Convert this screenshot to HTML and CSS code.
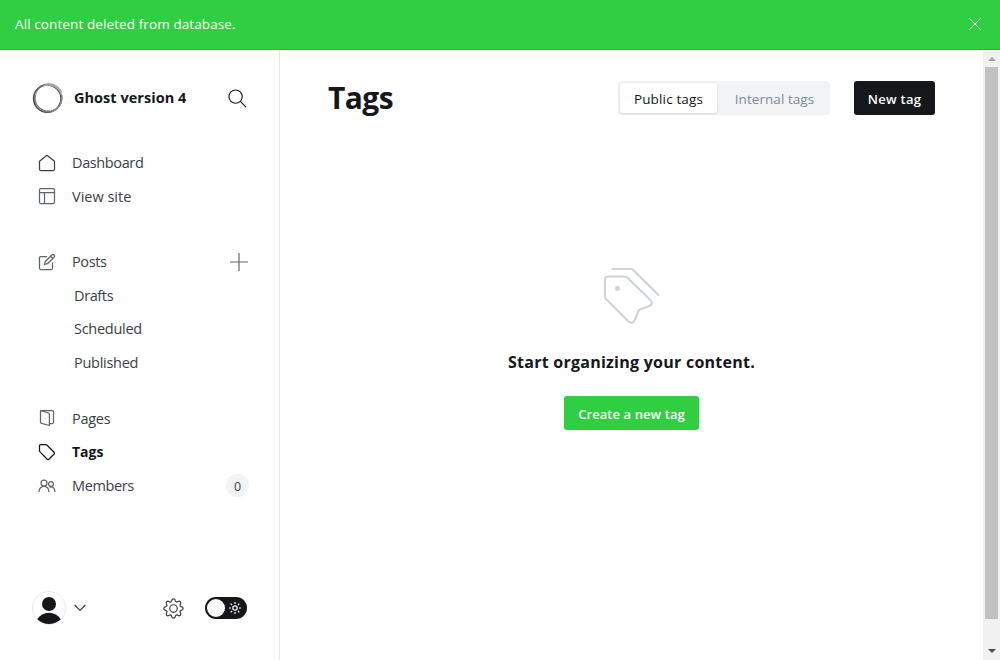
FILE: index.html
```html
<!DOCTYPE html>
<html lang="en">
<head>
<meta charset="utf-8">
<title>Tags</title>
<link rel="stylesheet" href="styles.css">
</head>
<body>
<div class="alert"><span class="alert-text">All content deleted from database.</span>
<svg class="close" viewBox="0 0 12 12"><path d="M.5.5l11 11M11.5.5l-11 11"/></svg></div>
<div class="app">
<aside class="sidebar">
  <header class="site">
    <svg class="logo" viewBox="0 0 32 32"><circle cx="15.300" cy="16.600" r="13.700" stroke="#444" stroke-width="1.500"/><ellipse cx="16.600" cy="16" rx="13.400" ry="14" stroke="#888" stroke-width="1"/><ellipse cx="15.700" cy="15.800" rx="14" ry="13.300" stroke="#666" stroke-width=".9" transform="rotate(35 16 16)"/><path d="M13 2.500C20 .5 27 4 29.500 10M11 4c8-2.500 16 1 18.500 9" stroke="#aaa" stroke-width="1.200"/><path d="M29.700 13c1 8-3 14-10 16.500" stroke="#888" stroke-width="1.500"/></svg>
    <span class="site-name">Ghost version 4</span>
    <svg class="search" viewBox="0 0 20 20"><circle cx="8" cy="8" r="7"/><path d="M13 13l6 6"/></svg>
  </header>
  <nav class="nav">
    <ul class="group">
      <li class="item"><svg class="icon home" viewBox="0 0 18 18"><path d="M1.500 7.200L9 1.300l7.500 5.900v8.100a1.200 1.200 0 0 1-1.200 1.200H2.700a1.200 1.200 0 0 1-1.200-1.200z"/></svg><span class="tight">Dashboard</span></li>
      <li class="item"><svg class="icon" viewBox="0 0 18 18"><rect x="1.500" y="1.500" width="15" height="15" rx="1.200"/><path d="M1.500 5.500h15M6.500 5.500v11"/></svg><span>View site</span></li>
    </ul>
    <ul class="group">
      <li class="item"><svg class="icon edit" viewBox="0 0 18 18"><path d="M9 3.500H2.700a1.200 1.200 0 0 0-1.200 1.200v10.600a1.200 1.200 0 0 0 1.200 1.200h10.600a1.200 1.200 0 0 0 1.200-1.200V9.500M6.500 11.500l.8-3 6.500-6.500a1.500 1.500 0 0 1 2.200 2.200l-6.500 6.500zM12.500 3.300l2.200 2.200"/></svg><span class="tight">Posts</span><svg class="plus" viewBox="0 0 18 18"><path d="M9 0v18M0 9h18"/></svg></li>
      <li class="item sub"><span class="tight">Drafts</span></li>
      <li class="item sub"><span class="snug">Scheduled</span></li>
      <li class="item sub"><span class="snug">Published</span></li>
    </ul>
    <ul class="group pages">
      <li class="item"><svg class="icon" viewBox="0 0 18 18"><path d="M2.500 1.500l8 2.500q.9.300.9 1.200v11.300l-7.900-2.200q-1-.3-1-1.300zM3 1.500h11.300q1.200 0 1.200 1.200v10.600q0 1.200-1.200 1.200h-2.500"/></svg><span class="snug">Pages</span></li>
      <li class="item active"><svg class="icon" viewBox="0 0 18 18"><path d="M1.500 2.700q0-1.200 1.200-1.200h5q.6 0 1.100.5l7.300 7.300q.9.900 0 1.700l-5.200 5.200q-.8.800-1.700 0L2 8.900q-.5-.5-.5-1.100z"/></svg><span>Tags</span></li>
      <li class="item"><svg class="icon members" viewBox="0 0 18 18"><circle cx="6" cy="6" r="3"/><path d="M1 15c.3-3.800 2-5.600 5-5.600s4.700 1.800 5 5.600"/><circle cx="13" cy="7" r="2.400"/><path d="M11.500 10.200c3.500-1 5.300.8 5.500 4.800"/></svg><span class="tight">Members</span><span class="badge">0</span></li>
    </ul>
  </nav>
  <footer class="tools">
    <svg class="avatar" viewBox="0 0 34 34"><circle cx="17" cy="17" r="16.500" fill="#fff" stroke="#e9ebed"/><circle cx="17" cy="13" r="7" fill="#15171a"/><path d="M5.200 28.300C8 24 12 21.800 17 21.800s9 2.200 11.800 6.500C25.500 31.300 21.500 33 17 33s-8.500-1.700-11.800-4.700z" fill="#15171a"/></svg>
    <svg class="chevron" viewBox="0 0 12 8"><path d="M.7 1L6 6.500 11.300 1"/></svg>
    <svg class="gear" viewBox="0 0 24 24"><circle cx="12" cy="12" r="4.300"/><path d="M9.900 3.100c.5-2.800 3.700-2.800 4.200 0 .3 1.400 1.500 1.900 2.700 1.100 2.300-1.600 4.600.7 3 3-.8 1.200-.3 2.400 1.100 2.700 2.800.5 2.800 3.700 0 4.200-1.400.3-1.900 1.500-1.100 2.700 1.600 2.300-.7 4.600-3 3-1.200-.8-2.400-.3-2.700 1.100-.5 2.800-3.700 2.800-4.200 0-.3-1.400-1.500-1.900-2.700-1.100-2.300 1.600-4.600-.7-3-3 .8-1.200.3-2.400-1.100-2.700-2.800-.5-2.800-3.700 0-4.200 1.400-.3 1.900-1.500 1.100-2.700-1.600-2.300.7-4.600 3-3 1.200.8 2.400.3 2.700-1.100z"/></svg>
    <span class="toggle"><i class="knob"></i><svg class="sun" viewBox="0 0 12 12"><circle cx="6" cy="6" r="2.200"/><path d="M6 0v2M6 10v2M0 6h2M10 6h2M1.700 1.700l1.400 1.400M8.900 8.900l1.400 1.400M1.700 10.300l1.400-1.400M8.900 3.100l1.400-1.400"/></svg></span>
  </footer>
</aside>
<main class="main">
  <header class="head">
    <h1 class="title">Tags</h1>
    <div class="tabs"><span class="tab on">Public tags</span><span class="tab">Internal tags</span></div>
    <button class="btn dark">New tag</button>
  </header>
  <section class="empty">
    <svg class="tags-art" viewBox="0 0 58 58"><path d="M9.500 2H28q1.200 0 2 .8L55.500 28M2 12.500Q2 9.500 5 9.500h16.500q1.800 0 3 1.200L47.300 33q3.300 3.800-.7 6l-9.200 3.200q-1.500.6-2 2L32 52.700q-2.200 5.200-6.200 2L3 32q-1-1-1-2.500z"/><circle cx="14.500" cy="21.500" r="2.500" class="hole"/></svg>
    <h2 class="message">Start organizing your content.</h2>
    <button class="btn green">Create a new tag</button>
  </section>
</main>
<div class="scrollbar"><i class="up"></i><i class="thumb"></i><i class="down"></i></div>
</div>
</body>
</html>
```
FILE: styles.css
```css
* { box-sizing: border-box; }
body { margin: 0; height: 660px; overflow: hidden; display: flex; flex-direction: column; background: #fff; color: #15171a; font-family: "Open Sans", "Noto Sans", sans-serif; }
svg { display: block; flex: none; fill: none; overflow: visible; }
.alert { height: 50px; flex: none; display: flex; align-items: center; justify-content: space-between; padding: 0 19px 2px 15px; background: #30cf43; border-bottom: 1px solid #27b638; color: #fff; font-size: 13.500px; letter-spacing: .1px; }
.close { width: 12px; height: 12px; stroke: #fff; stroke-width: 1; }
.app { flex: 1; min-height: 0; display: flex; }
.sidebar { width: 280px; flex: none; border-right: 1px solid #e5e8eb; display: flex; flex-direction: column; }
.site { display: flex; align-items: center; height: 32px; margin: 32px 32px 0 32px; }
.logo { width: 32px; height: 32px; margin-right: 10px; }
.site-name { font-size: 14.500px; font-weight: 700; letter-spacing: .03px; white-space: nowrap; padding-bottom: 2px; }
.search { width: 19px; height: 19px; margin-left: auto; stroke: #15171a; stroke-width: 1.200; }
.nav { padding: 32px 30px 0 38px; }
.group { list-style: none; margin: 0 0 31.500px; padding: 0; }
.group.pages { margin-top: -9px; }
.item { height: 33.600px; display: flex; align-items: center; font-size: 14.500px; color: #394047; white-space: nowrap; }
.tight { letter-spacing: -.38px; }
.snug { letter-spacing: -.27px; }
.icon { width: 18px; height: 18px; margin-right: 16px; stroke: #5d656d; stroke-width: 1.250; stroke-linejoin: round; }
.edit { margin-top: 1px; }
.home { stroke: #394047; }
.sub { padding-left: 36px; }
.plus { width: 18px; height: 18px; margin: 1px 1px 0 auto; stroke: #60666c; stroke-width: 1.200; }
.active { color: #15171a; font-weight: 700; font-size: 14px; }
.active .icon { stroke: #15171a; }
.badge { width: 23px; height: 23px; margin-left: auto; padding-top: 1px; border-radius: 50%; background: #f1f3f4; font-size: 12.500px; display: flex; align-items: center; justify-content: center; }
.tools { margin: auto 32px 35px 32px; height: 34px; display: flex; align-items: center; }
.avatar { width: 34px; height: 34px; }
.chevron { width: 12px; height: 8px; margin-left: 8px; stroke: #394047; stroke-width: 1.200; }
.gear { width: 21px; height: 21px; margin-left: auto; margin-right: 21.500px; stroke: #394047; stroke-width: 1.400; }
.toggle { width: 42px; height: 22px; border-radius: 11px; background: #15171a; display: flex; align-items: center; justify-content: space-between; padding: 0 6px 0 2px; }
.knob { width: 18px; height: 18px; border-radius: 50%; background: #fff; }
.sun { width: 12px; height: 12px; stroke: #fff; stroke-width: 1.200; }
.main { flex: 1; padding: 31px 48px 0 49px; }
.head { display: flex; align-items: center; height: 34px; }
.title { margin: -1px auto 0 -1px; font-size: 30px; line-height: 34px; font-weight: 700; letter-spacing: -.6px; }
.tabs { width: 212px; height: 34px; padding: 2px; border-radius: 3px; background: #f1f3f4; display: flex; margin-right: 24px; }
.tab { flex: 1; display: flex; align-items: center; justify-content: center; font-size: 13.500px; font-weight: 500; letter-spacing: .06px; color: #7c8b9a; white-space: nowrap; padding: 1px 0 0 4px; }
.tab.on { flex: none; width: 97px; padding-left: 0; background: #fff; color: #15171a; letter-spacing: .15px; border-radius: 3px; box-shadow: 0 1px 3px #15171a22; }
.btn { height: 34px; border: 0; border-radius: 3px; padding: 2px 0 0; font: 600 13px "Open Sans", sans-serif; letter-spacing: .08px; color: #fff; display: flex; align-items: center; justify-content: center; white-space: nowrap; }
.dark { width: 81px; background: #15171a; letter-spacing: .28px; }
.green { width: 135px; padding-left: 1px; background: #30cf43; }
.empty { display: flex; flex-direction: column; align-items: center; padding: 152px 2px 0 0; }
.tags-art { width: 58px; height: 58px; margin-left: 2px; stroke: #ced4d9; stroke-width: 2.200; stroke-linecap: round; stroke-linejoin: round; }
.hole { fill: #ced4d9; stroke: none; }
.message { margin: 25px 0 22px 1px; height: 24px; line-height: 24px; font-size: 16px; font-weight: 700; letter-spacing: .25px; white-space: nowrap; }
.scrollbar { width: 17px; background: #f1f1f1; display: flex; flex-direction: column; align-items: center; }
.up, .down { border: 4px solid transparent; width: 0; height: 0; }
.up { border-top: 0; border-bottom-color: #a3a3a3; margin: 7px 0 6px; }
.thumb { width: 13px; height: 552px; background: #c1c1c1; flex: none; }
.down { border-bottom: 0; border-top-color: #505050; margin: auto 0 7px; }
```
